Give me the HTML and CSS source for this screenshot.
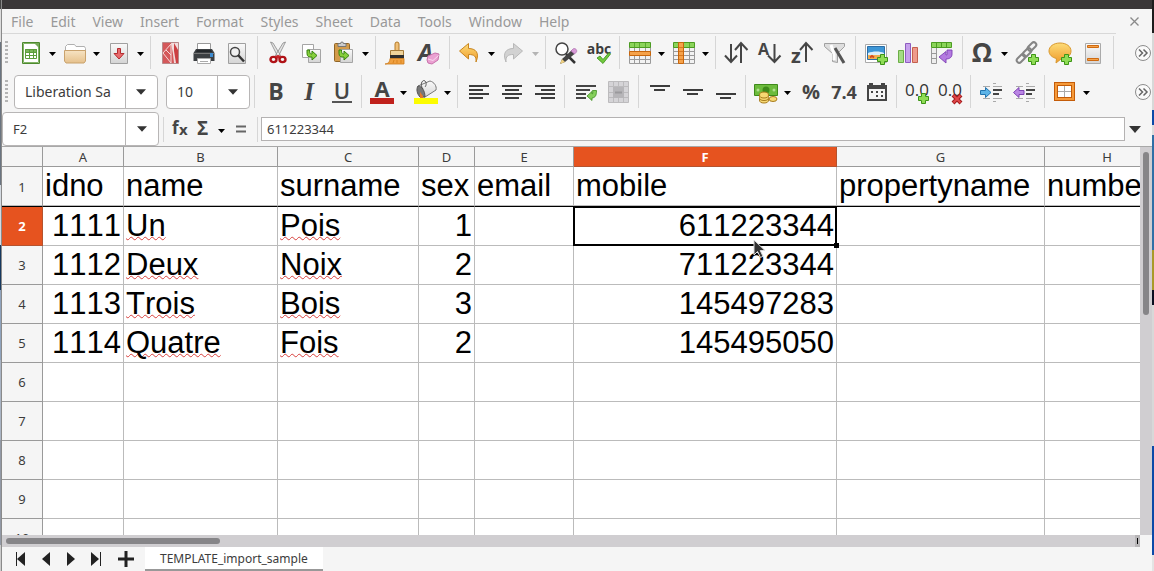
FILE: index.html
```html
<!DOCTYPE html>
<html lang="en">
<head>
<meta charset="utf-8">
<meta name="viewport" content="width=device-width, initial-scale=1">
<title>TEMPLATE_import_sample</title>
<link rel="stylesheet" href="styles.css">
</head>
<body>
<svg class="defs" aria-hidden="true">
  <defs>
    <linearGradient id="g-orange" x1="0" y1="0" x2="0" y2="1"><stop offset="0" stop-color="#fddc78"/><stop offset="1" stop-color="#ef9a2a"/></linearGradient>
    <linearGradient id="g-gray" x1="0" y1="0" x2="0" y2="1"><stop offset="0" stop-color="#fafafa"/><stop offset="1" stop-color="#d4d4d4"/></linearGradient>
    <linearGradient id="g-folder" x1="0" y1="0" x2="0" y2="1"><stop offset="0" stop-color="#f6e3c3"/><stop offset="1" stop-color="#e6c18c"/></linearGradient>
    <symbol id="tri" viewBox="0 0 7 4"><path d="M0 0h7L3.5 4z" fill="currentColor"/></symbol>
    <symbol id="plus" viewBox="0 0 11 11"><path d="M3.5.5h4v3h3v4h-3v3h-4v-3h-3v-4h3z" fill="#8fdc55" stroke="#3c9416"/></symbol>
    <symbol id="greenarrow" viewBox="0 0 12 12"><path d="M1 1v3.500C1 7.500 3 8.500 6 8v3l5-4.500L6 2v3C4.500 5.300 3.500 4.500 3.500 1z" fill="#86cf3c" stroke="#35830c"/></symbol>
    <symbol id="chev" viewBox="0 0 18 18"><circle cx="9" cy="9" r="7.500" fill="#fafafa" stroke="#8c8c8c"/><path d="M5 5.500L8.500 9 5 12.500M9.500 5.500L13 9l-3.500 3.500" fill="none" stroke="#666" stroke-width="1.500"/></symbol>
  </defs>
</svg>
<div class="desktop">
<div class="edge edge-left"></div>
<main class="window">
  <header class="titlebar"></header>
  <div class="menurow">
    <nav class="menu">
      <button>File</button><button>Edit</button><button>View</button><button>Insert</button><button>Format</button><button>Styles</button><button>Sheet</button><button>Data</button><button>Tools</button><button>Window</button><button>Help</button>
    </nav>
    <button class="close" aria-label="Close document"><svg width="9" height="9"><path d="M.5.5l8 8M8.500.5l-8 8" stroke="#8a8a8a" stroke-width="1.300"/></svg></button>
  </div>

  <div class="toolbar" role="toolbar" aria-label="Standard">
    <span class="grip"></span>
    <button class="tool" aria-label="New"><svg class="ico" viewBox="0 0 24 24"><path d="M3.500 1.500h17v21h-17z" fill="#fff" stroke="#4d8a2e"/><path d="M4.500 2.500h15v19h-15z" fill="none" stroke="#82b366"/><path d="M15 2h5v5z" fill="#76a95a"/><path d="M6 8h12v3H6z" fill="#79b558"/><path d="M6.500 8.500h11v9h-11zM10.500 8v10M14.500 8v10M6 11.500h12M6 14.500h12" fill="none" stroke="#5c9c3c"/></svg></button><button class="drop" aria-label="New options"><svg class="tri"><use href="#tri"/></svg></button>
    <button class="tool" aria-label="Open"><svg class="ico" viewBox="0 0 24 24"><path d="M2.500 9V5.500l2-2h7l1.500 2h8.500l1 2V12h-20z" fill="#fff" stroke="#b0b0b0"/><path d="M1.500 9.500h21v10.500l-1.500 2H3L1.500 20z" fill="url(#g-folder)" stroke="#c9a26d"/></svg></button><button class="drop" aria-label="Open options"><svg class="tri"><use href="#tri"/></svg></button>
    <button class="tool" aria-label="Save"><svg class="ico" viewBox="0 0 24 24"><path d="M3.500 2.500h17v20h-17z" fill="url(#g-gray)" stroke="#a0a0a0"/><path d="M10.500 7.500h3v5h3.500l-5 5.500-5-5.500h3.500z" fill="#e96a6c" stroke="#b42c30"/></svg></button><button class="drop" aria-label="Save options"><svg class="tri"><use href="#tri"/></svg></button>
    <span class="sep"></span>
    <button class="tool" aria-label="Export as PDF"><svg class="ico" viewBox="0 0 24 24"><path d="M3.500 1.500h16v21h-16z" fill="#d4585a" stroke="#b8898a"/><path d="M12 2h7v20h-4l-1-9z" fill="#f1dcdc"/><path d="M15 2l4 7v13h-2l-2-12z" fill="#cc3f42"/><path d="M4 12l8-9M4 12l8 10M12 3v19M7 9l5 5" stroke="#f6dada" fill="none"/></svg></button>
    <button class="tool" aria-label="Print"><svg class="ico" viewBox="0 0 24 24"><path d="M5.500 2.500h13v8h-13z" fill="#fff" stroke="#999"/><path d="M4 8h16l2.500 4v8h-21v-8z" fill="#3c3f42"/><path d="M5 9h14l1 2H4z" fill="#24272a"/><path d="M5.500 17.500h13v5h-13z" fill="#fff" stroke="#aaa"/><path d="M2 12h20v1H2z" fill="#777"/><path d="M18 12h3v4h-3z" fill="#3d8bd0"/><path d="M8 20.500h8" stroke="#aaa"/></svg></button>
    <button class="tool" aria-label="Print preview"><svg class="ico" viewBox="0 0 24 24"><path d="M3.500 2.500h17v20h-17z" fill="url(#g-gray)" stroke="#a0a0a0"/><circle cx="10" cy="11" r="4.500" fill="#f0f0f0" stroke="#454545" stroke-width="1.500"/><path d="M13 14l6 6.500" stroke="#333" stroke-width="2.500"/></svg></button>
    <span class="sep"></span>
    <button class="tool" aria-label="Cut"><svg class="ico" viewBox="0 0 24 24"><path d="M4.500 1l2.500 1 8.500 14-3 1zM19.500 1L17 2 8.500 16l3 1z" fill="#e5e5e5" stroke="#888" stroke-width=".8"/><ellipse cx="7.500" cy="18.500" rx="3" ry="2.600" fill="none" stroke="#b01217" stroke-width="2.400"/><ellipse cx="16.500" cy="18.500" rx="3" ry="2.600" fill="none" stroke="#b01217" stroke-width="2.400"/><path d="M9 15l3-1 3 1-3 3z" fill="#c82428"/></svg></button>
    <button class="tool" aria-label="Copy"><svg class="ico" viewBox="0 0 24 24"><path d="M3.500 3.500h11v13h-11z" fill="#fff" stroke="#a5a5a5"/><path d="M9.500 8.500h12v13h-12z" fill="url(#g-gray)" stroke="#a5a5a5"/><svg x="7" y="8" width="12" height="12"><use href="#greenarrow"/></svg></svg></button>
    <button class="tool" aria-label="Paste"><svg class="ico" viewBox="0 0 24 24"><rect x="2.500" y="2.500" width="15" height="18" rx="1" fill="#d39b4b" stroke="#8f6426"/><path d="M6 2.500h2.500a1.500 1.500 0 013 0H14v3H6z" fill="#ccc" stroke="#777"/><path d="M8.500 8.500h12v13h-12z" fill="url(#g-gray)" stroke="#a5a5a5"/><svg x="6" y="8" width="12" height="12"><use href="#greenarrow"/></svg></svg></button><button class="drop" aria-label="Paste options"><svg class="tri"><use href="#tri"/></svg></button>
    <span class="sep"></span>
    <button class="tool" aria-label="Clone formatting"><svg class="ico" viewBox="0 0 24 24"><path d="M11 10V3a2 2 0 014 0v7z" fill="#f0c078" stroke="#b47a28"/><path d="M6.500 9.500h13v5h-13z" fill="#efd39a" stroke="#a67c3a"/><path d="M6 14h14v3.500H6z" fill="#2e2e2e"/><path d="M6 17.500h14V23H1c3 0 5-2 5-5.500z" fill="#f0a040" stroke="#cc7a18" stroke-width=".8"/><path d="M9 22l1-3M13 22v-3M17 22v-3" stroke="#d98520"/></svg></button>
    <button class="tool" aria-label="Clear formatting"><svg class="ico" viewBox="0 0 24 24"><text x="1" y="20" class="t-bolditalic" font-size="24" fill="#454545">A</text><path d="M10 19l1-4 7-3 4 1-1 6-6 4-4-1z" fill="#eba0d2" stroke="#c873ac"/><path d="M11 18l5 1.500 5.500-5" fill="none" stroke="#f9d9ef"/></svg></button>
    <span class="sep"></span>
    <button class="tool" aria-label="Undo"><svg class="ico" viewBox="0 0 24 24"><path d="M10.500 2.500v5c7 0 11.500 4 7.500 13.500C18.500 15 16 13.500 10.500 13.500V18L1.500 10z" fill="url(#g-orange)" stroke="#c98620"/></svg></button><button class="drop" aria-label="Undo history"><svg class="tri"><use href="#tri"/></svg></button>
    <button class="tool" aria-label="Redo"><svg class="ico" viewBox="0 0 24 24"><path d="M11.500 2.500v5C4.500 7.500 0 11.500 4 21c-.5-6 2-7.500 7.500-7.500V18l9-8z" fill="#d2d2d2" stroke="#b8b8b8"/></svg></button><button class="drop drop-off" aria-label="Redo history"><svg class="tri"><use href="#tri"/></svg></button>
    <span class="sep"></span>
    <button class="tool" aria-label="Find and replace"><svg class="ico" viewBox="0 0 24 24"><circle cx="8" cy="8" r="6" fill="#fff" stroke="#444" stroke-width="1.500"/><path d="M12 13l9 9" stroke="#333" stroke-width="2.500"/><path d="M6 23l2-5 10-9 3 3.500L11 21z" fill="#444"/><path d="M6 23l2-5 3 3z" fill="#f0d080"/><path d="M17 10l2-2c2-1.500 4.500 1 3.500 3l-2 2z" fill="#d89ad8" stroke="#a86aa8" stroke-width=".7"/></svg></button>
    <button class="tool" aria-label="Spelling"><svg class="ico" viewBox="0 0 24 24"><text x="12" y="13" text-anchor="middle" class="t-bold" font-size="14" fill="#3c3c3c">abc</text><path d="M10 17l3-2 3 3.500 6-7 1.500 1.500L16 22.500z" fill="#72c83e" stroke="#378f14" stroke-width=".8"/></svg></button>
    <span class="sep"></span>
    <button class="tool" aria-label="Row"><svg class="ico" viewBox="0 0 24 24"><path d="M1.500 1.500h21v21h-21z" fill="#f2f2f2"/><path d="M1.500 6v16.500h21V6M6.500 6v16M11.500 6v16M17.500 6v16M2 18.500h20" fill="none" stroke="#9a9a9a"/><path d="M1.500 1.500h21v5h-21z" fill="#8bd45a" stroke="#4c9c22"/><path d="M6.500 2v4M11.500 2v4M17.500 2v4" stroke="#5aa830"/><path d="M1.500 10.500h21v4h-21z" fill="#f5a24a" stroke="#c8660c"/></svg></button><button class="drop" aria-label="Row options"><svg class="tri"><use href="#tri"/></svg></button>
    <button class="tool" aria-label="Column"><svg class="ico" viewBox="0 0 24 24"><path d="M1.500 1.500h21v21h-21z" fill="#f2f2f2"/><path d="M1.500 6v16.500h21V6M6.500 6v16M17.500 6v16M2 10.500h20M2 14.500h20M2 18.500h20" fill="none" stroke="#9a9a9a"/><path d="M1.500 1.500h21v5h-21z" fill="#8bd45a" stroke="#4c9c22"/><path d="M17.500 2v4" stroke="#5aa830"/><path d="M6.500 1.500h5v21h-5z" fill="#f5a24a" stroke="#c8660c"/><path d="M7 6.500h4M7 10.500h4M7 14.500h4M7 18.500h4" stroke="#d87820"/></svg></button><button class="drop" aria-label="Column options"><svg class="tri"><use href="#tri"/></svg></button>
    <span class="sep"></span>
    <button class="tool" aria-label="Sort"><svg class="ico line" viewBox="0 0 24 24"><path d="M7 3v18M1 14.500L7 21l6-6.500M17 22V3M11 9l6-7 6.500 7"/></svg></button>
    <button class="tool" aria-label="Sort ascending"><svg class="ico" viewBox="0 0 24 24"><text x="1" y="14" class="t-bold" font-size="16" fill="#454545">A</text><path d="M17.500 3v18M11 14.500l6.500 6.500 6-6.500" class="stroke"/></svg></button>
    <button class="tool" aria-label="Sort descending"><svg class="ico" viewBox="0 0 24 24"><text x="1" y="22" class="t-bold" font-size="20" fill="#454545">z</text><path d="M16 21V2M10 9l6-7 6.500 7" class="stroke"/></svg></button>
    <button class="tool" aria-label="AutoFilter"><svg class="ico" viewBox="0 0 24 24"><path d="M1.500 2.500h20v3l-7 7v9l-5-1v-8l-8-7z" fill="#dedede" stroke="#a0a0a0"/><path d="M8 4l3 9v6" fill="none" stroke="#fff" stroke-width="3"/><path d="M12 7l9 15" stroke="#555" stroke-width="3"/></svg></button>
    <span class="sep"></span>
    <button class="tool" aria-label="Insert image"><svg class="ico" viewBox="0 0 24 24"><path d="M1.500 3.500h21v18h-21z" fill="#fff" stroke="#aaa"/><path d="M3.500 5.500h17v13h-17z" fill="#3d96d6" stroke="#2c6ea6"/><path d="M4 12c5-2 12-2 16 0v2H4z" fill="#d9effb"/><path d="M4 14h16v4H4z" fill="#f0b050"/><path d="M6 16.500l2-1.500 2 1.500" stroke="#d4481e" stroke-width="2" fill="none"/><use href="#plus" x="13" y="13" width="11" height="11"/></svg></button>
    <button class="tool" aria-label="Insert chart"><svg class="ico" viewBox="0 0 24 24"><path d="M1.500 9.500h5v12h-5z" fill="#a4dc84" stroke="#6cae46"/><path d="M8.500 2.500h5v19h-5z" fill="#c6a0ec" stroke="#8e5cc0"/><path d="M15.500 6.500h5v15h-5z" fill="#ee9a8c" stroke="#c4604e"/></svg></button>
    <button class="tool" aria-label="Insert pivot table"><svg class="ico" viewBox="0 0 24 24"><path d="M1.500 7v15.500h5V7M2 12.500h4M2 17.500h4" fill="#eee" stroke="#999"/><path d="M1.500 1.500h20v5h-20z" fill="#8bd45a" stroke="#4c9c22"/><path d="M6.500 2v4M11.500 2v4M16.500 2v4" stroke="#4c9c22"/><path d="M17 9h5v4c0 3-2 5-6 5v4l-7-6 7-5.500V14c1.500 0 1.500-1 1-2z" fill="#b47ae0" stroke="#7d3fb4" stroke-width=".9"/></svg></button>
    <span class="sep"></span>
    <button class="tool" aria-label="Special character"><svg class="ico" viewBox="0 0 24 24"><text x="11" y="21" text-anchor="middle" class="t-bold" font-size="26" fill="#454545">Ω</text></svg></button><button class="drop" aria-label="Special character options"><svg class="tri"><use href="#tri"/></svg></button>
    <button class="tool" aria-label="Insert hyperlink"><svg class="ico" viewBox="0 0 24 24"><g fill="none" stroke="#858585" stroke-width="2"><rect x="12" y="3" width="10" height="5" rx="2.500" transform="rotate(-45 17 5.500)"/><rect x="7" y="9" width="10" height="5" rx="2.500" transform="rotate(-45 12 11.500)"/><rect x="1" y="15" width="10" height="5" rx="2.500" transform="rotate(-45 6 17.500)"/></g><use href="#plus" x="13" y="13" width="11" height="11"/></svg></button>
    <button class="tool" aria-label="Insert comment"><svg class="ico" viewBox="0 0 24 24"><path d="M12 2c6.500 0 11 3.500 11 8s-4 8-10 8l-5 4 .5-4.500C4 16.500 1 13.500 1 10c0-4.500 4.500-8 11-8z" fill="url(#g-orange)" stroke="#d8982e"/><use href="#plus" x="13" y="13" width="11" height="11"/></svg></button>
    <button class="tool" aria-label="Headers and footers"><svg class="ico" viewBox="0 0 24 24"><path d="M4.500 2.500h15v20h-15z" fill="url(#g-gray)" stroke="#aaa"/><path d="M6.500 4.500h11v2h-11zM6.500 17.500h11v2h-11z" fill="#f5a24a" stroke="#cf6a10"/></svg></button>
    <span class="sep"></span>
    <button class="more" aria-label="More controls"><svg width="18" height="18"><use href="#chev"/></svg></button>
  </div>

  <div class="toolbar" role="toolbar" aria-label="Formatting">
    <span class="grip"></span>
    <div class="combo combo-font"><select aria-label="Font name"><option>Liberation Sa</option></select><svg class="bigtri"><use href="#tri"/></svg></div>
    <div class="combo combo-size"><select aria-label="Font size"><option>10</option></select><svg class="bigtri"><use href="#tri"/></svg></div>
    <span class="sep"></span>
    <button class="tool" aria-label="Bold"><svg class="ico" viewBox="0 0 24 24"><text x="13" y="20" text-anchor="middle" class="t-bold" font-size="23" fill="#454545">B</text></svg></button>
    <button class="tool" aria-label="Italic"><svg class="ico" viewBox="0 0 24 24"><text x="13" y="20" text-anchor="middle" class="t-serif" font-size="25" fill="#454545">I</text></svg></button>
    <button class="tool" aria-label="Underline"><svg class="ico" viewBox="0 0 24 24"><text x="13" y="19" text-anchor="middle" class="t-semi" font-size="22" fill="#454545">U</text><path d="M3 21h20v2H3z" fill="#555"/></svg></button>
    <span class="sep"></span>
    <button class="tool" aria-label="Font color"><svg class="ico" viewBox="0 0 24 24"><text x="12" y="17" text-anchor="middle" class="t-bold" font-size="22" fill="#454545">A</text><path d="M0 18h24v6H0z" fill="#c0211c"/></svg></button><button class="drop" aria-label="Font color options"><svg class="tri"><use href="#tri"/></svg></button>
    <button class="tool" aria-label="Highlighting"><svg class="ico" viewBox="0 0 24 24"><path d="M4 6L16 1c4 1 7 5 6 9L11 17c-4 0-8-6-7-11z" fill="url(#g-gray)" stroke="#777"/><path d="M4 6c4 0 7 5 7 11H6C3 14 2 9 4 6z" fill="#777" stroke="#555"/><path d="M9 9c-4-5 0-10 2-8 2 2 1 5 0 6" fill="none" stroke="#555"/><path d="M6 12l3 4v2H6z" fill="#e0782a"/><path d="M0 18h24v6H0z" fill="#fcfc00"/></svg></button><button class="drop" aria-label="Highlighting options"><svg class="tri"><use href="#tri"/></svg></button>
    <span class="sep"></span>
    <button class="tool" aria-label="Align left"><svg class="ico bars" viewBox="0 0 24 24"><path d="M3 6h20M3 10h14M3 14h20M3 18h14"/></svg></button>
    <button class="tool" aria-label="Center"><svg class="ico bars" viewBox="0 0 24 24"><path d="M3 6h20M6 10h14M3 14h20M6 18h14"/></svg></button>
    <button class="tool" aria-label="Align right"><svg class="ico bars" viewBox="0 0 24 24"><path d="M3 6h20M9 10h14M3 14h20M9 18h14"/></svg></button>
    <span class="sep"></span>
    <button class="tool" aria-label="Wrap text"><svg class="ico" viewBox="0 0 24 24"><path d="M3 6h20M3 10h14M3 14h10M3 18h10" stroke="#454545" stroke-width="2"/><path d="M19.500 10.500h4c0 5-1 7-4.500 7.500v2.500l-5-4.500 5-4.500v2.500c1 0 1-1.500.5-3.500z" fill="#86cf5c" stroke="#3b8e1c" stroke-width=".8"/></svg></button>
    <button class="tool" aria-label="Merge cells"><svg class="ico" viewBox="0 0 24 24"><path d="M2.500 1.500h20v21h-20zM7.500 2v20M12.500 2v4M17.500 2v20M3 6.500h19M3 17.500h19M3 12.500h4M17 12.500h5M12.500 17v5" fill="#d5d4d7" stroke="#bcbbbd"/><path d="M7 7h11v11H7z" fill="#b6b5b8"/><path d="M9 12.500h7" stroke="#9a999c" stroke-width="2"/></svg></button>
    <span class="sep"></span>
    <button class="tool" aria-label="Align top"><svg class="ico bars" viewBox="0 0 24 24"><path d="M3 6h20M7 10h11"/></svg></button>
    <button class="tool" aria-label="Center vertically"><svg class="ico bars" viewBox="0 0 24 24"><path d="M3 10h20M7 14h11"/></svg></button>
    <button class="tool" aria-label="Align bottom"><svg class="ico bars" viewBox="0 0 24 24"><path d="M3 14h20M7 18h11"/></svg></button>
    <span class="sep"></span>
    <button class="tool" aria-label="Format as currency"><svg class="ico" viewBox="0 0 24 24"><path d="M.5 4.500h23v11H.5z" fill="#6cbb3c" stroke="#3e8a1a"/><circle cx="12" cy="10" r="3.500" fill="#3e8a1a"/><circle cx="4" cy="10" r="1.500" fill="#b2e08e"/><circle cx="20" cy="10" r="1.500" fill="#b2e08e"/><g fill="#f6d873" stroke="#a87c1c"><ellipse cx="19" cy="19" rx="4" ry="2.500"/><ellipse cx="10" cy="20" rx="4.500" ry="3"/><ellipse cx="10" cy="17.500" rx="4.500" ry="3"/><ellipse cx="10" cy="15" rx="4.500" ry="3"/></g></svg></button><button class="drop" aria-label="Currency options"><svg class="tri"><use href="#tri"/></svg></button>
    <button class="tool" aria-label="Format as percent"><svg class="ico" viewBox="0 0 24 24"><text x="13" y="19" text-anchor="middle" class="t-bold" font-size="20" fill="#454545">%</text></svg></button>
    <button class="tool" aria-label="Format as number"><svg class="ico" viewBox="0 0 24 24"><text x="13" y="19" text-anchor="middle" class="t-bold" font-size="18" fill="#454545">7.4</text></svg></button>
    <button class="tool" aria-label="Format as date"><svg class="ico" viewBox="0 0 24 24"><path d="M3 5h2V3h4v2h8V3h4v2h2v16H3zM5 9v10h16V9z" fill="#454545" fill-rule="evenodd"/><path d="M7 12h2M12 12h2M17 12h2M12 16h2M17 16h2" stroke="#454545" stroke-width="2"/></svg></button>
    <span class="sep"></span>
    <button class="tool" aria-label="Add decimal place"><svg class="ico" viewBox="0 0 24 24"><text x="12" y="16" text-anchor="middle" class="t-plain" font-size="17" fill="#333">0.0</text><use href="#plus" x="13" y="13" width="11" height="11"/></svg></button>
    <button class="tool" aria-label="Delete decimal place"><svg class="ico" viewBox="0 0 24 24"><text x="12" y="16" text-anchor="middle" class="t-plain" font-size="17" fill="#333">0.0</text><path d="M15 15l8 8M23 15l-8 8" stroke="#a31a1c" stroke-width="4"/><path d="M15.500 15.500l7 7M22.500 15.500l-7 7" stroke="#e0484a" stroke-width="2"/></svg></button>
    <span class="sep"></span>
    <button class="tool" aria-label="Increase indent"><svg class="ico" viewBox="0 0 24 24"><path d="M14 3.500h3M14 6.500h9M4 6.500h7M4 18.500h7M14 18.500h9M14 21.500h3" stroke="#aaa"/><path d="M14 10h9M14 14h6" stroke="#454545" stroke-width="2"/><path d="M1.500 10.500h5v-3l5.500 5-5.500 5v-3h-5z" fill="#5cb4e8" stroke="#2474ae"/></svg></button>
    <button class="tool" aria-label="Decrease indent"><svg class="ico" viewBox="0 0 24 24"><path d="M14 3.500h3M14 6.500h9M4 6.500h7M4 18.500h7M14 18.500h9M14 21.500h3" stroke="#aaa"/><path d="M14 10h9M14 14h6" stroke="#454545" stroke-width="2"/><path d="M12 10.500H7v-3l-5.500 5 5.500 5v-3h5z" fill="#ba86e4" stroke="#7f43b4"/></svg></button>
    <span class="sep"></span>
    <button class="tool" aria-label="Borders"><svg class="ico" viewBox="0 0 24 24"><path d="M3 4h17v15H3z" fill="#fff" stroke="#c45c08" stroke-width="4"/><path d="M3 4h17v15H3z" fill="none" stroke="#f59a3a" stroke-width="2"/><path d="M11.500 6v11M5 11.500h13" stroke="#aaa"/></svg></button><button class="drop" aria-label="Border options"><svg class="tri"><use href="#tri"/></svg></button>
    <button class="more" aria-label="More controls"><svg width="18" height="18"><use href="#chev"/></svg></button>
  </div>

  <div class="formulabar">
    <div class="namebox"><input type="text" value="F2" aria-label="Name box"><button aria-label="Choose range"><svg class="bigtri"><use href="#tri"/></svg></button></div>
    <span class="sep"></span>
    <button class="fx" aria-label="Function wizard"><svg width="20" height="24"><text x="1" y="17" class="t-bold" font-size="17" fill="#454545">f</text><text x="8" y="18" class="t-bold" font-size="15" fill="#454545">x</text></svg></button>
    <button class="fx" aria-label="Sum"><svg width="16" height="24"><text x="2" y="18" class="t-bold" font-size="19" fill="#454545">Σ</text></svg></button>
    <button class="drop" aria-label="Function list"><svg class="tri"><use href="#tri"/></svg></button>
    <button class="fx equals" aria-label="Formula"><svg width="12" height="20"><path d="M1 7.500h10M1 12.500h10" stroke="#666" stroke-width="2"/></svg></button>
    <span class="sep"></span>
    <input class="formula" type="text" value="611223344" aria-label="Input line">
    <button class="expand" aria-label="Expand formula bar"><svg class="exptri"><use href="#tri"/></svg></button>
  </div>

  <div class="sheet">
    <div class="grid">
      <table>
        <colgroup><col class="c-head"><col class="c-a"><col class="c-b"><col class="c-c"><col class="c-d"><col class="c-e"><col class="c-f"><col class="c-g"><col class="c-h"></colgroup>
        <thead><tr><th></th><th>A</th><th>B</th><th>C</th><th>D</th><th>E</th><th class="on">F</th><th>G</th><th>H</th></tr></thead>
        <tbody>
          <tr class="frozen"><th>1</th><td>idno</td><td>name</td><td>surname</td><td>sex</td><td>email</td><td>mobile</td><td>propertyname</td><td>numbe</td></tr>
          <tr><th class="on">2</th><td class="num">1111</td><td><span class="sp">Un</span></td><td><span class="sp">Pois</span></td><td class="num">1</td><td></td><td class="num active">611223344<span class="handle"></span><svg class="cursor" width="14" height="20"><path d="M1 1v15l3.500-3.500 3 6 2.500-1.200-2.800-5.800H12z" fill="#333" stroke="#ddd"/></svg></td><td></td><td></td></tr>
          <tr><th>3</th><td class="num">1112</td><td><span class="sp">Deux</span></td><td><span class="sp">Noix</span></td><td class="num">2</td><td></td><td class="num">711223344</td><td></td><td></td></tr>
          <tr><th>4</th><td class="num">1113</td><td><span class="sp">Trois</span></td><td><span class="sp">Bois</span></td><td class="num">3</td><td></td><td class="num">145497283</td><td></td><td></td></tr>
          <tr><th>5</th><td class="num">1114</td><td><span class="sp">Quatre</span></td><td><span class="sp">Fois</span></td><td class="num">2</td><td></td><td class="num">145495050</td><td></td><td></td></tr>
          <tr><th>6</th><td></td><td></td><td></td><td></td><td></td><td></td><td></td><td></td></tr>
          <tr><th>7</th><td></td><td></td><td></td><td></td><td></td><td></td><td></td><td></td></tr>
          <tr><th>8</th><td></td><td></td><td></td><td></td><td></td><td></td><td></td><td></td></tr>
          <tr><th>9</th><td></td><td></td><td></td><td></td><td></td><td></td><td></td><td></td></tr>
          <tr><th>10</th><td></td><td></td><td></td><td></td><td></td><td></td><td></td><td></td></tr>
        </tbody>
      </table>
    </div>
    <div class="vscroll"><div class="vthumb"></div></div>
  </div>
  <div class="hscroll"><div class="track"><div class="hthumb"></div></div><div class="split"></div><div class="corner"></div></div>
  <footer class="tabs">
    <button aria-label="First sheet"><svg width="12" height="16"><path d="M1.500 1v14" stroke="#222"/><path d="M10 1v14L2 8z" fill="#222"/></svg></button>
    <button aria-label="Previous sheet"><svg width="12" height="16"><path d="M10 1v14L2 8z" fill="#222"/></svg></button>
    <button aria-label="Next sheet"><svg width="12" height="16"><path d="M2 1v14l8-7z" fill="#222"/></svg></button>
    <button aria-label="Last sheet"><svg width="12" height="16"><path d="M10.500 1v14" stroke="#222"/><path d="M1 1v14l8-7z" fill="#222"/></svg></button>
    <button class="add" aria-label="Add sheet"><svg width="18" height="18"><path d="M9 1v16M1 9h16" stroke="#222" stroke-width="3"/></svg></button>
    <button class="tab">TEMPLATE_import_sample</button>
  </footer>
</main>
<div class="edge edge-right"></div>
</div>
</body>
</html>
```

FILE: styles.css
```css
* { box-sizing: border-box; }
body {
  margin: 0;
  font: 14px "Noto Sans", "Open Sans", sans-serif;
  color: #3c3c3c;
  background: #f5f5f5;
}
button, input, select {
  font: inherit;
  color: inherit;
  border: 0;
  margin: 0;
  padding: 0;
  background: none;
  border-radius: 0;
  outline: 0;
}
svg { display: block; flex: none; }
.defs { position: absolute; width: 0; height: 0; }

.desktop { display: flex; height: 100vh; overflow: hidden; }
.edge { flex: none; width: 2px; }
.edge-left {
  border-right: 1px solid #8a8a8a;
  background: linear-gradient(#444 0 9px, #ddd 9px 42px, #6a7480 42px 185px, #d5dbe2 185px 245px, #16385e 245px 290px, #8fa3bd 290px 360px, #a9b4c4 360px 440px, #9299a6 440px 545px, #ccc 545px);
}
.edge-right {
  background: linear-gradient(#1d1d1d 0 33px, #d8d8d8 33px 110px, #0b4aa8 110px 125px, #dcdcdc 125px 135px, #2f6fa6 135px 250px, #a99a2a 250px 290px, #0a0f20 290px 305px, #d8d8d8 305px 446px, #0b4aa8 446px 555px, #e4e4e4 555px);
}
.window { flex: 1; min-width: 0; display: flex; flex-direction: column; }
.titlebar { flex: none; height: 9px; background: #3a3738; }

.menurow { flex: none; display: flex; height: 25px; }
.menu {
  flex: 1;
  display: flex;
  gap: 17px;
  padding-left: 9px;
  border-bottom: 1px solid #d8d8d8;
  color: #999;
}
.close { width: 36px; display: grid; place-items: center; }

.toolbar { flex: none; display: flex; align-items: center; height: 39px; padding-bottom: 2px; }
.grip {
  flex: none;
  width: 3px;
  height: 24px;
  margin: 0 6px 0 3px;
  background: repeating-linear-gradient(#b4b4b4 0 2px, #f5f5f5 2px 4px);
}
.tool { flex: none; width: 33px; height: 32px; display: grid; place-items: center; }
.ico { width: 24px; height: 24px; overflow: visible; }
.line path, .stroke { fill: none; stroke: #454545; stroke-width: 2; }
.bars path { stroke: #3c3c3c; stroke-width: 2; }
.drop { flex: none; width: 11px; height: 32px; display: grid; place-items: center; color: #000; }
.drop-off { color: #b4b4b4; }
.tri { width: 7px; height: 4px; }
.drop .tri { margin-top: 3px; }
.bigtri { width: 10px; height: 6px; color: #333; }
.exptri { width: 12px; height: 7px; color: #333; }
.sep { flex: none; width: 1px; height: 33px; margin: 0 3px 0 4px; background: #d6d6d6; }
.more { flex: none; margin-left: auto; }

.t-bold { font-family: "Open Sans", sans-serif; font-weight: 700; }
.t-semi { font-family: "Open Sans", sans-serif; font-weight: 600; }
.t-bolditalic { font-family: "Open Sans", sans-serif; font-weight: 700; font-style: italic; }
.t-serif { font-family: "Liberation Serif", serif; font-weight: 700; font-style: italic; }
.t-plain { font-family: "Open Sans", sans-serif; }

.combo {
  flex: none;
  display: grid;
  grid-template-columns: 1fr 32px;
  align-items: center;
  justify-items: center;
  height: 34px;
  border: 1px solid #b8b6b6;
  border-radius: 4px;
  background: linear-gradient(#b8b6b6, #b8b6b6) right 31px top / 1px 100% no-repeat #fff;
}
.combo select {
  grid-area: 1 / 1 / 2 / 3;
  width: 100%;
  height: 100%;
  padding-left: 10px;
  appearance: none;
}
.combo .bigtri { grid-area: 1 / 2; pointer-events: none; }
.combo-font { width: 144px; margin-right: 8px; }
.combo-size { width: 84px; }

.formulabar { flex: none; display: flex; align-items: center; height: 35px; border-bottom: 1px solid #a8a8a8; }
.namebox {
  flex: none;
  display: flex;
  width: 157px;
  height: 34px;
  border: 1px solid #b8b6b6;
  border-radius: 4px;
  background: #fff;
}
.namebox input { flex: 1; min-width: 0; padding-left: 10px; font-size: 13px; }
.namebox button { width: 33px; border-left: 1px solid #b8b6b6; display: grid; place-items: center; }
.fx { flex: none; margin-left: 4px; }
.formulabar .drop { margin-left: 5px; }
.formulabar .sep { height: 25px; }
.formulabar .equals { margin: 0 6px 0 8px; }
.formula {
  flex: 1;
  min-width: 0;
  height: 24px;
  padding: 0 5px;
  border: 1px solid #b4b2b2;
  background: #fff;
  font-size: 13px;
}
.expand { width: 27px; padding-left: 4px; }

.sheet { flex: 1; min-height: 0; display: flex; }
.grid { flex: 1; min-width: 0; overflow: hidden; background: #fff; }
table { table-layout: fixed; width: 1168px; border-collapse: separate; border-spacing: 0; }
.c-head { width: 41px; }
.c-a { width: 81px; }
.c-b { width: 154px; }
.c-c { width: 141px; }
.c-d { width: 56px; }
.c-e { width: 99px; }
.c-f { width: 263px; }
.c-g { width: 208px; }
.c-h { width: 125px; }
th {
  padding: 0;
  border: solid #9a9a9a;
  border-width: 0 1px 1px 0;
  background: #f5f5f5;
  font-size: 13px;
  font-weight: 400;
  line-height: 18px;
  text-align: center;
}
thead th { height: 20px; }
th.on { background: #e6531f; color: #fff; font-weight: 700; border-color: #b5532f; }
td {
  position: relative;
  height: 39px;
  padding: 0 2px;
  border: solid #bbb;
  border-width: 0 1px 1px 0;
  color: #000;
  font: 31px/38px "Liberation Sans", Arial, sans-serif;
  font-kerning: none;
  white-space: nowrap;
  vertical-align: top;
}
.frozen td, .frozen th { height: 40px; border-bottom-color: #000; box-shadow: inset 0 -1px #bbb; }
.num { text-align: right; }
.sp {
  text-decoration: underline wavy #d8403c 1px;
  text-decoration-skip-ink: none;
  text-underline-offset: 0;
}
.active::after {
  content: "";
  position: absolute;
  inset: -1px;
  border: 2px solid #000;
}
.handle { position: absolute; right: -3px; bottom: -3px; width: 5px; height: 5px; background: #000; z-index: 1; }
.cursor { position: absolute; right: 69px; bottom: -14px; z-index: 2; }

.vscroll { flex: none; width: 12px; padding: 5px 3px; background: #d0ced1; }
.vthumb { height: 43%; border-radius: 3px; background: #868588; }
.hscroll { flex: none; display: flex; height: 12px; }
.track { flex: 1; padding: 3px 4px; background: #d0ced1; }
.hthumb { width: 19%; height: 6px; border-radius: 3px; background: #868588; }
.split { width: 5px; border: solid #b8b6b8; border-width: 3px 2px; background: #000; }
.corner { width: 12px; }

.tabs { flex: none; display: flex; align-items: center; height: 24px; padding-left: 13px; gap: 13px; }
.add { margin-left: 2px; }
.tab {
  align-self: stretch;
  margin-left: -3px;
  padding: 0 15px;
  background: #fff;
  border-bottom: 2px solid #989898;
  font-size: 12px;
}
```
